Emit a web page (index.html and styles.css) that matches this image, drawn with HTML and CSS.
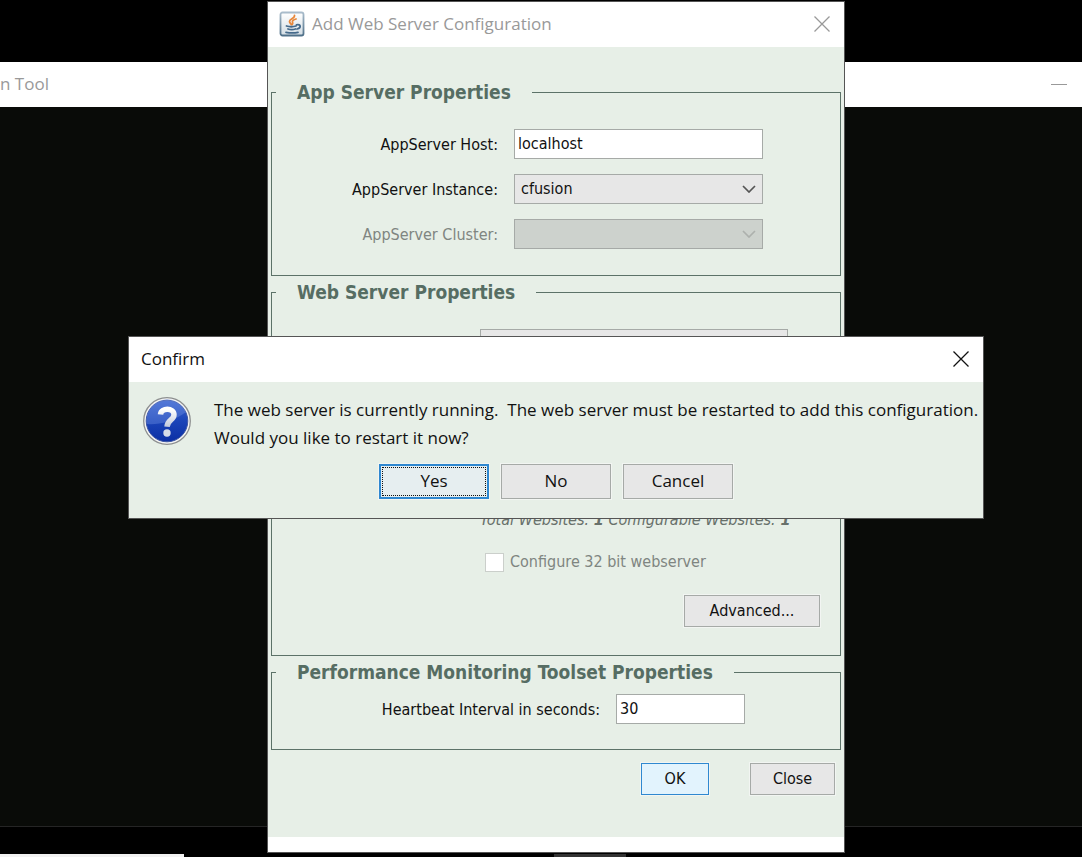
FILE: index.html
```html
<!DOCTYPE html>
<html lang="en">
<head>
  <meta charset="UTF-8">
  <meta name="viewport" content="width=device-width, initial-scale=1.0">
  <title>Add Web Server Configuration</title>
  <link rel="stylesheet" href="styles.css">
</head>
<body>
  <div class="desktop">
    <!-- parent window -->
    <div class="window main-window">
      <div class="titlebar main-titlebar">
        <span class="title inactive">n Tool</span>
        <button class="window-btn inactive" aria-label="Minimize">
          <svg width="16" height="16" viewBox="0 0 16 16" stroke="currentColor" fill="none"><path d="M0 8.5h16"/></svg>
        </button>
      </div>
      <div class="main-body"></div>
    </div>

    <div class="taskbar">
      <span class="task-search"></span>
      <span class="task-active"></span>
    </div>

    <!-- configuration dialog -->
    <form class="window config-window">
      <div class="titlebar">
        <svg class="java-icon" width="26" height="26" viewBox="0 0 26 26" fill="none">
          <defs>
            <linearGradient id="tile" x1="0" y1="0" x2="0" y2="1">
              <stop offset="0" stop-color="#ffffff"/>
              <stop offset="1" stop-color="#d3dde4"/>
            </linearGradient>
            <linearGradient id="tileEdge" x1="0" y1="0" x2="0" y2="1">
              <stop offset="0" stop-color="#a9bccb"/>
              <stop offset="1" stop-color="#4f7089"/>
            </linearGradient>
          </defs>
          <rect x="1.5" y="1.5" width="23" height="23" rx="2" fill="url(#tile)" stroke="url(#tileEdge)" stroke-width="1.8"/>
          <path d="M15.500 4.500c.5 3-5 3.500-5 6 0 1.200 1.200 1.800 1.800 3M17 8c-2.500.8-4 1.800-3.500 3.100.4.900.4 1.500-.3 2.400" stroke="#e8873a" stroke-width="1.800" stroke-linecap="round"/>
          <path d="M7.500 15c2.500.8 7 .8 9.500 0M9 18c2 .6 5.500.6 7.500 0M17.500 13.800c4.500-1 5 3 .6 4.200M7 21.300c3.500.7 9 .7 12 0" stroke="#456a8b" stroke-width="1.800" stroke-linecap="round"/>
        </svg>
        <span class="title inactive">Add Web Server Configuration</span>
        <button type="button" class="window-btn inactive" aria-label="Close window">
          <svg width="16" height="16" viewBox="0 0 16 16" stroke="currentColor" stroke-width="1.300" fill="none"><path d="M.5.5l15 15M15.500.5l-15 15"/></svg>
        </button>
      </div>

      <div class="config-body">
        <fieldset class="group">
          <legend>App Server Properties</legend>
          <div class="form-grid">
            <label for="host">AppServer Host:</label>
            <input id="host" class="field" type="text" value="localhost">
            <label for="instance">AppServer Instance:</label>
            <select id="instance" class="field">
              <option>cfusion</option>
            </select>
            <label for="cluster" class="muted">AppServer Cluster:</label>
            <select id="cluster" class="field" disabled></select>
          </div>
        </fieldset>

        <fieldset class="group">
          <legend>Web Server Properties</legend>
          <div class="web-server">
            <select class="field server-select" aria-label="Web Server"></select>
            <p class="site-count">Total Websites: <b>1</b> Configurable Websites: <b>1</b></p>
            <label class="check muted">
              <input type="checkbox" disabled>
              Configure 32 bit webserver
            </label>
            <button type="button" class="btn btn-advanced">Advanced...</button>
          </div>
        </fieldset>

        <fieldset class="group">
          <legend>Performance Monitoring Toolset Properties</legend>
          <div class="heartbeat">
            <label for="heartbeat">Heartbeat Interval in seconds:</label>
            <input id="heartbeat" class="field" type="text" value="30">
          </div>
        </fieldset>

        <div class="actions">
          <button type="button" class="btn btn-ok">OK</button>
          <button type="button" class="btn btn-close">Close</button>
        </div>
      </div>
    </form>

    <!-- confirm dialog -->
    <div class="window confirm-window" role="dialog" aria-labelledby="confirmTitle">
      <div class="titlebar">
        <span class="title" id="confirmTitle">Confirm</span>
        <button class="window-btn" aria-label="Close dialog">
          <svg width="16" height="16" viewBox="0 0 16 16" stroke="currentColor" stroke-width="1.300" fill="none"><path d="M.5.5l15 15M15.500.5l-15 15"/></svg>
        </button>
      </div>
      <div class="confirm-body">
        <div class="message">
          <svg class="question-icon" width="48" height="48" viewBox="0 0 48 48">
            <defs>
              <linearGradient id="ball" x1="0" y1="0" x2="0" y2="1">
                <stop offset="0" stop-color="#3f67cf"/>
                <stop offset="0.5" stop-color="#1b44b8"/>
                <stop offset="1" stop-color="#0b2fa4"/>
              </linearGradient>
              <linearGradient id="mark" x1="0" y1="0" x2="0" y2="1">
                <stop offset="0" stop-color="#ffffff"/>
                <stop offset="1" stop-color="#c3cbdc"/>
              </linearGradient>
            </defs>
            <circle cx="24" cy="24" r="23.300" fill="#f4f4f4" stroke="#8d8f90" stroke-width="1.300"/>
            <circle cx="24" cy="24" r="20.800" fill="url(#ball)" stroke="#3e57a5"/>
            <path d="M4 27C15 28 30 25 43 15A20.500 20.500 0 0 0 4 27z" fill="#7c9ce8" opacity=".35"/>
            <path d="M17.500 17.500c.5-7 13.500-7 13.500.2 0 5.500-6.500 5-7 12" fill="none" stroke="url(#mark)" stroke-width="5.500"/>
            <circle cx="24" cy="36" r="3.700" fill="#d5dbe8"/>
          </svg>
          <p class="message-text">The web server is currently running.&nbsp; The web server must be restarted to add this configuration.<br>Would you like to restart it now?</p>
        </div>
        <div class="confirm-actions">
          <button class="btn btn-yes">Yes</button>
          <button class="btn">No</button>
          <button class="btn">Cancel</button>
        </div>
      </div>
    </div>
  </div>
</body>
</html>
```
FILE: styles.css
```css
:root {
  --panel: #e7efe7;
  --group-line: #5c7268;
  --control: #e7e7e7;
  --control-border: #a6aaa7;
  --accent: #2f88d0;
  --muted: #7f8581;
  --ui-font: "Open Sans", "Noto Sans", sans-serif;
  --form-font: "DejaVu Sans Condensed", "DejaVu Sans", sans-serif;
}

* {
  box-sizing: border-box;
  margin: 0;
  padding: 0;
}

body {
  background: #000;
  color: #111;
  font-family: var(--form-font);
  font-size: 16px;
}

button,
input,
select {
  font: inherit;
  color: inherit;
}

.desktop {
  position: relative;
  min-height: 100vh;
  overflow: hidden;
}

.window {
  position: absolute;
}

.titlebar {
  display: flex;
  align-items: center;
  height: 45px;
  padding: 0 14px 2px 12px;
  background: #fff;
}

.title {
  flex: 1;
  font-family: var(--ui-font);
  font-size: 17px;
}

.window-btn {
  display: flex;
  border: none;
  background: none;
  color: #111;
}

.inactive {
  color: #999;
}

/* parent window */
.main-window {
  top: 62px;
  bottom: 30px;
  left: 0;
  right: 0;
  display: flex;
  flex-direction: column;
  border-bottom: 1px solid #252525;
}

.main-titlebar {
  padding-left: 0;
  padding-right: 15px;
}

.main-body {
  flex: 1;
  background: #090b08;
}

.taskbar {
  position: absolute;
  bottom: 0;
  left: 0;
  right: 0;
  display: flex;
  gap: 370px;
  height: 3px;
}

.task-search {
  width: 184px;
  background: #f2f2f2;
}

.task-active {
  width: 72px;
  background: #333;
}

/* configuration dialog */
.config-window {
  top: 1px;
  left: 267px;
  right: 237px;
  padding-bottom: 15px;
  border: 1px solid #555;
  background: #fff;
}

.java-icon {
  margin-left: -1px;
  margin-right: 7px;
}

.config-body {
  padding: 33px 3px 42px;
  background: var(--panel);
}

.group {
  min-width: 0;
  margin-bottom: 4px;
  border: 1px solid var(--group-line);
}

.group legend {
  margin-left: 4px;
  padding: 0 21px;
  color: #566d63;
  font-size: 19px;
  font-weight: bold;
  line-height: 24px;
}

.form-grid {
  display: grid;
  grid-template-columns: 226px 1fr;
  gap: 15px 16px;
  align-items: center;
  padding: 25px 77px 26px 0;
}

.form-grid label {
  text-align: right;
}

.muted {
  color: var(--muted);
}

.field {
  width: 100%;
  height: 30px;
  padding: 0 3px 1px;
  border: 1px solid var(--control-border);
  border-radius: 0;
  background: #fff;
}

select.field {
  appearance: none;
  padding: 0 6px 1px;
  background: var(--control) url("data:image/svg+xml,%3Csvg xmlns='http://www.w3.org/2000/svg' width='14' height='8' fill='none' stroke='%23555' stroke-width='1.7'%3E%3Cpath d='M1 1l6 6 6-6'/%3E%3C/svg%3E") no-repeat right 6px center;
}

select.field:disabled {
  background-color: #cdd2cd;
  background-image: url("data:image/svg+xml,%3Csvg xmlns='http://www.w3.org/2000/svg' width='14' height='8' fill='none' stroke='%23adb1ad' stroke-width='1.7'%3E%3Cpath d='M1 1l6 6 6-6'/%3E%3C/svg%3E");
  opacity: 1;
}

.web-server {
  display: flex;
  flex-direction: column;
  align-items: flex-start;
  padding: 25px 20px 28px 208px;
}

.server-select {
  width: calc(100% - 32px);
}

.site-count {
  margin-top: 149px;
  color: #68716b;
  font-style: italic;
  line-height: 24px;
  white-space: nowrap;
}

.check {
  display: flex;
  align-items: center;
  gap: 6px;
  margin: 18px 0 21px 5px;
  line-height: 24px;
}

.check input {
  appearance: none;
  width: 19px;
  height: 19px;
  border: 1px solid #cbcfcb;
  background: #fff;
}

.heartbeat {
  display: flex;
  align-items: center;
  justify-content: flex-end;
  gap: 16px;
  padding: 10px 95px 25px 0;
}

.heartbeat .field {
  width: 129px;
}

.btn {
  height: 32px;
  padding-bottom: 2px;
  border: 1px solid var(--control-border);
  background: var(--control);
  box-shadow: 0 0 0 1px #f2f5f2;
}

.btn-advanced {
  align-self: flex-end;
  width: 136px;
}

.actions {
  display: flex;
  justify-content: flex-end;
  gap: 41px;
  padding: 9px 6px 0 0;
}

.btn-ok {
  width: 68px;
  border-color: var(--accent);
  background: #e2f3fd;
}

.btn-close {
  width: 85px;
}

/* confirm dialog */
.confirm-window {
  top: 336px;
  left: 128px;
  right: 98px;
  border: 1px solid #555;
  background: var(--panel);
  font-family: var(--ui-font);
  font-size: 17px;
}

.confirm-body {
  padding: 14px 14px 19px;
}

.message {
  display: flex;
  gap: 23px;
}

.question-icon {
  flex: none;
  margin-top: 1px;
}

.message-text {
  line-height: 28px;
  white-space: nowrap;
}

.confirm-actions {
  display: flex;
  justify-content: center;
  gap: 12px;
  margin-top: 12px;
}

.confirm-actions .btn {
  width: 110px;
  height: 35px;
}

.confirm-actions .btn-yes {
  border: 2px solid var(--accent);
  outline: 1px dotted #111;
  outline-offset: -4px;
  background: #e6eef0;
}
```
